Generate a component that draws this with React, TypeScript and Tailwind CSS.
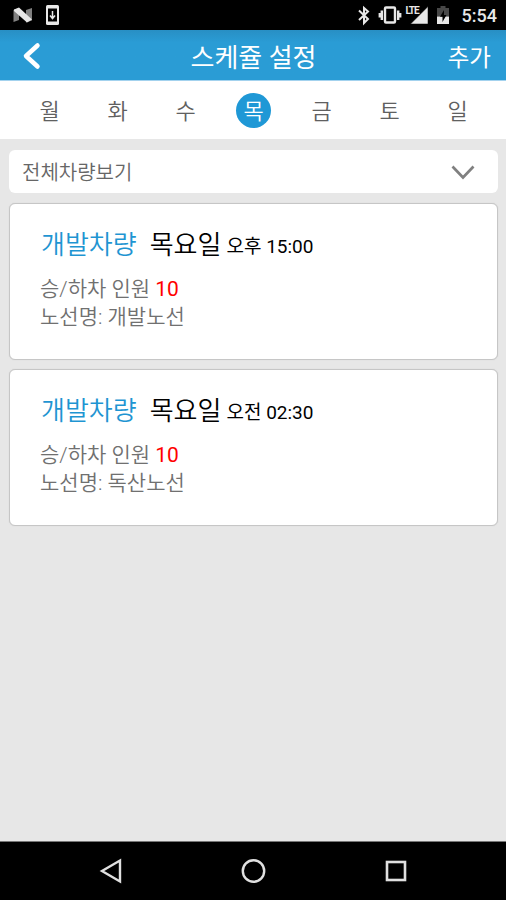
import React, { useState } from 'react';

interface Schedule {
  id: number;
  car: string;
  day: string;
  time: string;
  people: number;
  route: string;
}

const DAYS = ['월', '화', '수', '목', '금', '토', '일'];

const SCHEDULES: Schedule[] = [
  {
    id: 1,
    car: '개발차량',
    day: '목요일',
    time: '오후 15:00',
    people: 10,
    route: '개발노선',
  },
  {
    id: 2,
    car: '개발차량',
    day: '목요일',
    time: '오전 02:30',
    people: 10,
    route: '독산노선',
  },
];

function StatusBar() {
  return (
    <div className="flex h-[30px] shrink-0 items-center bg-black pr-[9px] pl-[13px] text-[#e8e8e8]">
      <svg width="20" height="30" viewBox="0 0 20 30">
        <path d="M0.500 22V10L6 8v12zM13 10l6-2v12.500L13 22.500z" fill="#808080" />
        <path d="M1 9.500L6 7.500 19 19.500 14 22.500 1 11z" fill="#e6e6e6" />
      </svg>
      <svg className="ml-[13px]" width="13" height="30" viewBox="0 0 13 30">
        <rect x="0" y="5" width="13" height="20" rx="1.5" fill="currentColor" />
        <rect x="2" y="8.5" width="9" height="13" fill="#000" />
        <path d="M6.5 11v7M4 15.5l2.5 3 2.5-3" fill="none" stroke="currentColor" strokeWidth="1.5" />
      </svg>
      <svg className="ml-auto" width="12" height="30" viewBox="0 0 12 30">
        <path
          d="M1 10.500l9 8.500-4 4V8l4 3.500-9 8.500"
          fill="none"
          stroke="currentColor"
          strokeWidth="2"
        />
      </svg>
      <svg className="ml-[8px]" width="24" height="30" viewBox="0 0 24 30">
        <rect x="7" y="7.5" width="10" height="15" rx="1" fill="none" stroke="currentColor" strokeWidth="2.4" />
        <path d="M3.800 10.500v9.500M20.200 10.500v9.500M1.800 13v4.500M22.200 13v4.500" stroke="currentColor" strokeWidth="2.400" />
      </svg>
      <div className="ml-[4px] flex h-[30px] w-[23px]">
        <span className="mt-[6px] h-[9px] w-[13px] text-[10px] leading-[9px] font-bold tracking-[-1px]">
          LTE
        </span>
        <svg className="-ml-[9px] shrink-0" width="19" height="30" viewBox="0 0 19 30">
          <path d="M0.500 24L18 6.500V24z" fill="currentColor" stroke="#000" strokeWidth="0.500" />
        </svg>
      </div>
      <svg className="ml-[8px]" width="12" height="30" viewBox="0 0 12 30">
        <path d="M0 8h3.500V6h5v2H12v8.500H0z" fill="#484848" />
        <path d="M0 16.500h12V24H0z" fill="currentColor" />
        <path d="M7 10l-4 6.800h2.500V22l4-7H7z" fill="#000" />
      </svg>
      <span className="ml-[13px] pt-px text-[18px] leading-[29px] font-medium">5:54</span>
    </div>
  );
}

function Header() {
  return (
    <header className="grid h-[51px] shrink-0 grid-cols-[1fr_auto_1fr] items-center border-b border-[#a3d2ee] bg-[#2a9cd5] bg-linear-to-b from-[#288fc4] to-[#2a9cd5] to-25% text-white">
      <svg className="mt-[2px] ml-[22px]" width="20" height="30" viewBox="0 0 20 30">
        <path
          d="M15.500 4.500L4 15l11.500 10.500"
          fill="none"
          stroke="currentColor"
          strokeWidth="4.500"
          strokeLinecap="round"
          strokeLinejoin="round"
        />
      </svg>
      <h1 className="pt-[7px] pl-px text-[26px] leading-[43px]">스케쥴 설정</h1>
      <button className="justify-self-end pt-[6px] pr-[15px] text-[23.5px] leading-[44px]">
        추가
      </button>
    </header>
  );
}

function ScheduleCard({ schedule }: { schedule: Schedule }) {
  return (
    <li className="h-[157px] rounded-[6px] border-[1.5px] border-[#c6c6c6] bg-white pt-[23px] pl-[31px] shadow-[0_0_1px_#c6c6c6]">
      <p className="flex items-baseline leading-[36px] text-black">
        <span className="text-[26px] font-[350] text-[#1f95d2]">{schedule.car}</span>
        <span className="ml-[13px] text-[26px] font-[350]">{schedule.day}</span>
        <span className="relative -top-px ml-[5px] text-[19px]">{schedule.time}</span>
      </p>
      <p className="mt-[9px] -ml-px text-[21px] leading-[28px] font-[350] text-[#707070]">
        승/하차 인원 <span className="font-normal text-[#f00]">{schedule.people}</span>
      </p>
      <p className="-ml-px text-[21px] leading-[28px] font-[350] text-[#707070]">
        노선명: {schedule.route}
      </p>
    </li>
  );
}

export default function App() {
  const [select, setSelect] = useState<number>(3);

  return (
    <div className="flex h-[900px] w-[506px] flex-col overflow-hidden bg-[#e7e7e7] font-['Roboto','Noto_Sans_CJK_KR',sans-serif]">
      <StatusBar />
      <Header />
      <nav className="flex h-[58px] shrink-0 items-center bg-white px-[15px]">
        {DAYS.map((day, index) => (
          <button
            className="flex flex-1 justify-center"
            key={day}
            onClick={() => setSelect(index)}
          >
            <span
              className={`flex h-[35px] w-[35px] items-center justify-center rounded-full pt-[2px] pl-px text-[22px] leading-[33px] font-[350] ${
                select === index ? 'bg-[#1f98d6] text-white' : 'text-[#606060]'
              }`}
            >
              {day}
            </span>
          </button>
        ))}
      </nav>
      <main className="flex-1 pt-[11px] pr-[8px] pl-[9px]">
        <div className="flex h-[43px] items-center justify-between rounded-[6px] bg-white pr-[23px] pl-[13px] text-[20px] font-[350] text-[#666]">
          <span className="pt-[2px]">전체차량보기</span>
          <svg width="24" height="16" viewBox="0 0 24 16">
            <path d="M1.500 2.500L12 13.500 22.500 2.500" fill="none" stroke="#808080" strokeWidth="2.700" />
          </svg>
        </div>
        <ul className="mt-[10px] flex flex-col gap-[9px]">
          {SCHEDULES.map((schedule) => (
            <ScheduleCard key={schedule.id} schedule={schedule} />
          ))}
        </ul>
      </main>
      <footer className="flex h-[59px] shrink-0 items-center justify-between border-t border-[#777] bg-black px-[99px]">
        <svg width="24" height="26" viewBox="0 0 24 26">
          <path d="M21 2.500v21L3 13z" fill="none" stroke="#e0e0e0" strokeWidth="2.400" />
        </svg>
        <svg width="26" height="26" viewBox="0 0 26 26">
          <circle cx="12.500" cy="13" r="10.700" fill="none" stroke="#e0e0e0" strokeWidth="2.400" />
        </svg>
        <svg width="22" height="26" viewBox="0 0 22 26">
          <rect x="2" y="4" width="18" height="18" fill="none" stroke="#e0e0e0" strokeWidth="2.600" />
        </svg>
      </footer>
    </div>
  );
}
